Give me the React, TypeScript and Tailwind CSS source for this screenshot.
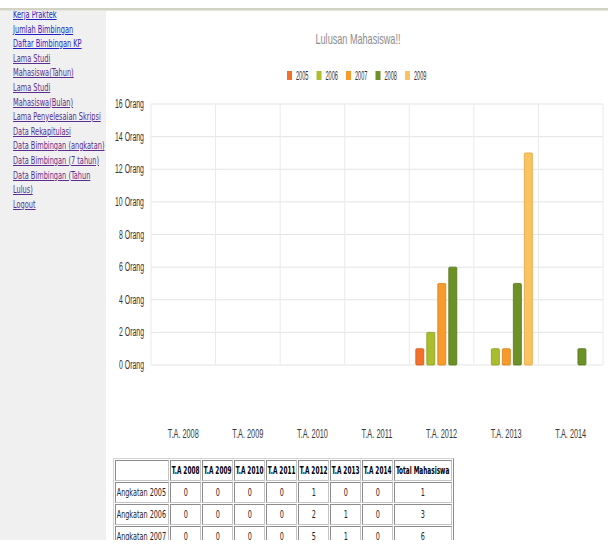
import React from "react";

const CHART_FONT = '"Liberation Sans", Arial, sans-serif';
const UI_FONT = '"DejaVu Sans Condensed", "DejaVu Sans", sans-serif';

const YEARS = [2005, 2006, 2007, 2008, 2009];
const FILL: Record<number, string> = {
  2005: "#f2712a",
  2006: "#a9bd2e",
  2007: "#f79b2c",
  2008: "#6c9127",
  2009: "#fbc35f",
};
const STROKE: Record<number, string> = {
  2005: "#d2581a",
  2006: "#8a9c1c",
  2007: "#d97f18",
  2008: "#557518",
  2009: "#e0a640",
};

const COLS = ["T.A. 2008", "T.A. 2009", "T.A. 2010", "T.A. 2011", "T.A. 2012", "T.A. 2013", "T.A. 2014"];
const VALUES: number[][] = [
  [0, 0, 0, 0, 0],
  [0, 0, 0, 0, 0],
  [0, 0, 0, 0, 0],
  [0, 0, 0, 0, 0],
  [1, 2, 5, 6, 0],
  [0, 1, 1, 5, 13],
  [0, 0, 0, 1, 0],
];

const LINKS: { lines: string[]; visited: boolean }[] = [
  { lines: ["Kerja Praktek"], visited: false },
  { lines: ["Jumlah Bimbingan"], visited: false },
  { lines: ["Daftar Bimbingan KP"], visited: false },
  { lines: ["Lama Studi", "Mahasiswa(Tahun)"], visited: true },
  { lines: ["Lama Studi", "Mahasiswa(Bulan)"], visited: true },
  { lines: ["Lama Penyelesaian Skripsi"], visited: true },
  { lines: ["Data Rekapitulasi"], visited: true },
  { lines: ["Data Bimbingan (angkatan)"], visited: true },
  { lines: ["Data Bimbingan (7 tahun)"], visited: true },
  { lines: ["Data Bimbingan (Tahun", "Lulus)"], visited: true },
  { lines: ["Logout"], visited: true },
];

const TABLE_HEAD = ["T.A 2008", "T.A 2009", "T.A 2010", "T.A 2011", "T.A 2012", "T.A 2013", "T.A 2014", "Total Mahasiswa"];
const TABLE_ROWS: { label: string; vals: number[] }[] = [
  { label: "Angkatan 2005", vals: [0, 0, 0, 0, 1, 0, 0, 1] },
  { label: "Angkatan 2006", vals: [0, 0, 0, 0, 2, 1, 0, 3] },
  { label: "Angkatan 2007", vals: [0, 0, 0, 0, 5, 1, 0, 6] },
];

const PLOT_L = 45;
const PLOT_R = 497;
const PLOT_T = 93;
const PLOT_B = 354;
const COL_W = (PLOT_R - PLOT_L) / 7;
const ROW_H = (PLOT_B - PLOT_T) / 8;
const UNIT = (PLOT_B - PLOT_T) / 16;

function Chart() {
  return (
    <svg width={502} height={439} viewBox="0 0 502 439" className="block" fontFamily={CHART_FONT}>
      <text x={252} y={33} textAnchor="middle" fontSize={14.5} fill="#8c8c8c" textLength={85} lengthAdjust="spacingAndGlyphs">
        Lulusan Mahasiswa!!
      </text>
      {YEARS.map((y, i) => {
        const x = 181 + i * 29.5;
        return (
          <g key={y}>
            <rect x={x} y={60} width={5} height={9} fill={FILL[y]} />
            <text x={x + 9} y={69} fontSize={13} fill="#333" textLength={12.5} lengthAdjust="spacingAndGlyphs">
              {y}
            </text>
          </g>
        );
      })}
      {Array.from({ length: 9 }).map((_, k) => {
        const y = PLOT_T + k * ROW_H;
        const n = 16 - k * 2;
        return (
          <g key={k}>
            <line x1={PLOT_L} x2={PLOT_R} y1={y} y2={y} stroke="#e4e4e4" strokeWidth={1} />
            <text x={38} y={y + 4} textAnchor="end" fontSize={12} fill="#333" textLength={n >= 10 ? 29 : 25} lengthAdjust="spacingAndGlyphs">
              {`${n} Orang`}
            </text>
          </g>
        );
      })}
      {Array.from({ length: 8 }).map((_, i) => {
        const x = PLOT_L + i * COL_W;
        return <line key={i} x1={x} x2={x} y1={PLOT_T} y2={PLOT_B} stroke="#eaeaea" strokeWidth={1} />;
      })}
      {VALUES.map((vals, c) =>
        vals.map((v, s) => {
          if (!v) return null;
          const x = PLOT_L + c * COL_W + 6.5 + s * 11;
          const h = v * UNIT;
          const yr = YEARS[s];
          return (
            <rect
              key={`${c}-${s}`}
              x={x}
              y={PLOT_B - h}
              width={8}
              height={h}
              rx={1}
              fill={FILL[yr]}
              stroke={STROKE[yr]}
              strokeWidth={0.8}
            />
          );
        })
      )}
      {COLS.map((label, i) => (
        <text
          key={label}
          x={PLOT_L + i * COL_W + COL_W / 2}
          y={427}
          textAnchor="middle"
          fontSize={13.5}
          fill="#3a3a3a"
          textLength={31}
          lengthAdjust="spacingAndGlyphs"
        >
          {label}
        </text>
      ))}
    </svg>
  );
}

function Sidebar() {
  return (
    <aside className="w-[106px] shrink-0 bg-[#f0f0f0] overflow-hidden">
      <ul className="-mt-[3px] pl-[13px] text-[11px] leading-[14.6px]" style={{ fontFamily: UI_FONT }}>
        {LINKS.map((l, i) => (
          <li key={i}>
            <a href="#" className={`block ${l.visited ? "text-[#5a2d8e]" : "text-[#1f1fc4]"}`}>
              {l.lines.map((t, j) => (
                <span key={j} className="block w-max whitespace-nowrap origin-left scale-x-[0.667] underline">
                  {t}
                </span>
              ))}
            </a>
          </li>
        ))}
      </ul>
    </aside>
  );
}

function DataTable() {
  const widths = ["w-[54px]", "w-[31px]", "w-[31px]", "w-[31px]", "w-[31px]", "w-[31px]", "w-[31px]", "w-[31px]", "w-[58px]"];
  const cell = "border border-t-[#8c8c8c] border-l-[#8c8c8c] border-b-[#c4c4c4] border-r-[#c4c4c4] h-[21px] p-0 overflow-visible";
  return (
    <table
      className="ml-[7px] mt-[8px] w-[341px] table-fixed border-separate border-spacing-[1px] border border-t-[#d4d4d4] border-l-[#d4d4d4] border-b-[#8c8c8c] border-r-[#8c8c8c] text-black"
      style={{ fontFamily: UI_FONT }}
    >
      <colgroup>
        {widths.map((w, i) => (
          <col key={i} className={w} />
        ))}
      </colgroup>
      <thead>
        <tr>
          <th className={cell}></th>
          {TABLE_HEAD.map((h) => (
            <th key={h} className={`${cell} text-[10px] font-bold`}>
              <div className="flex justify-center">
                <span className="whitespace-nowrap scale-x-[0.64]">{h}</span>
              </div>
            </th>
          ))}
        </tr>
      </thead>
      <tbody>
        {TABLE_ROWS.map((r) => (
          <tr key={r.label}>
            <td className={`${cell} text-[10px] text-[#222]`}>
              <span className="block w-max whitespace-nowrap pl-[1px] origin-left scale-x-[0.72]">{r.label}</span>
            </td>
            {r.vals.map((v, i) => (
              <td key={i} className={`${cell} text-[10px] text-[#222]`}>
                <div className="flex justify-center">
                  <span className="whitespace-nowrap scale-x-[0.72]">{v}</span>
                </div>
              </td>
            ))}
          </tr>
        ))}
      </tbody>
    </table>
  );
}

export default function App() {
  return (
    <div className="w-[608px] h-[548px] bg-white overflow-hidden">
      <div className="h-[8px] bg-white" />
      <div className="h-[2px] bg-[#d3d3c5]" />
      <div className="h-[1px] bg-[#e6e6de]" />
      <div className="flex h-[529px] overflow-hidden">
        <Sidebar />
        <main className="flex-1 bg-white overflow-hidden">
          <Chart />
          <DataTable />
        </main>
      </div>
    </div>
  );
}
